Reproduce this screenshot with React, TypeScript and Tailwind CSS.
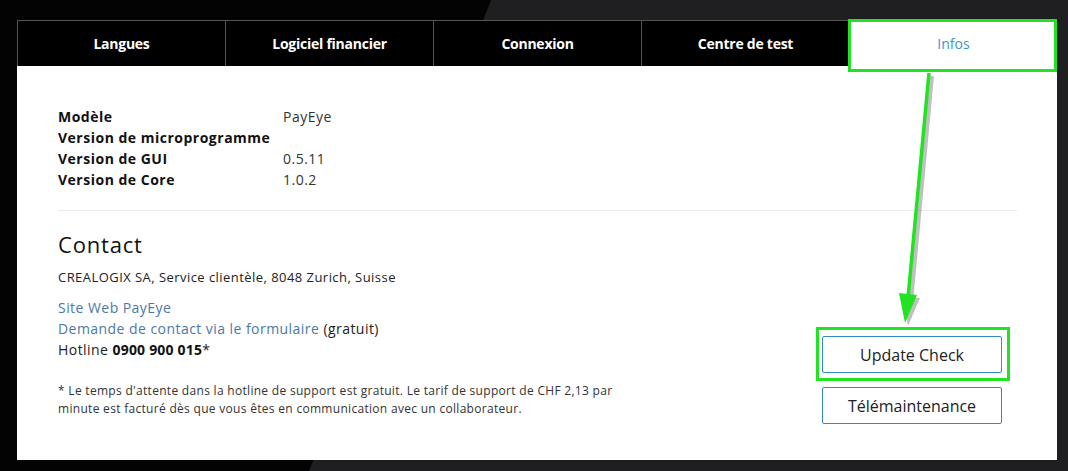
import React from "react";

const tabs = ["Langues", "Logiciel financier", "Connexion", "Centre de test", "Infos"];

export default function App() {
  return (
    <div
      className="relative h-[471px] w-full overflow-hidden bg-[#030303]"
      style={{ fontFamily: '"Open Sans", "Liberation Sans", sans-serif' }}
    >
      {/* background diagonal */}
      <svg className="absolute inset-0 h-[471px] w-[1068px]" viewBox="0 0 1068 471">
        <polygon points="491,0 1068,0 1068,471 309,471" fill="#1f1f21" />
      </svg>

      <div className="relative pl-[17px] pt-[20px]">
        <div className="w-[1040px]">
          {/* tabs */}
          <div className="flex h-[46px] border-l border-t border-[#555]">
            {tabs.map((t, i) => {
              const active = i === tabs.length - 1;
              return (
                <div
                  key={t}
                  className={
                    active
                      ? "flex flex-1 items-center justify-center bg-white text-[14px] text-[#3b95d3]"
                      : "flex flex-1 items-center justify-center border-r border-[#555] bg-black text-[14px] font-bold tracking-[-0.25px] text-white"
                  }
                >
                  {t}
                </div>
              );
            })}
          </div>

          {/* panel */}
          <div className="h-[394px] bg-white pl-[41px] pr-[40px] pt-[40px]">
            <div className="text-[14px] leading-[21px] tracking-[0.5px] text-[#222]">
              {[
                ["Modèle", "PayEye"],
                ["Version de microprogramme", ""],
                ["Version de GUI", "0.5.11"],
                ["Version de Core", "1.0.2"],
              ].map(([k, v]) => (
                <div key={k} className="flex">
                  <div className="w-[225px] font-bold text-[#111]">{k}</div>
                  <div className="text-[#333]">{v}</div>
                </div>
              ))}
            </div>

            <div className="mt-[20px] h-px bg-[#ebebeb]" />

            <div className="mt-[18px] flex justify-between">
              <div>
                <div className="text-[22px] leading-[30px] tracking-[0.8px] text-[#111]">Contact</div>
                <div className="mt-[8px] text-[13px] leading-[20px] tracking-[0.45px] text-[#222]">
                  CREALOGIX SA, Service clientèle, 8048 Zurich, Suisse
                </div>
                <div className="mt-[10px] text-[14px] leading-[21px] tracking-[0.45px] text-[#222]">
                  <div className="text-[#4a79a8]">Site Web PayEye</div>
                  <div>
                    <span className="text-[#4a79a8]">Demande de contact via le formulaire</span> (gratuit)
                  </div>
                  <div>
                    Hotline <span className="font-bold tracking-[0.2px] text-[#111]">0900 900 015</span>*
                  </div>
                </div>
                <div className="mt-[22px] text-[12px] leading-[18px] tracking-[0.3px] text-[#333]">
                  <div>
                    * Le temps d'attente dans la hotline de support est gratuit. Le tarif de support de CHF 2,13 par
                  </div>
                  <div>minute est facturé dès que vous êtes en communication avec un collaborateur.</div>
                </div>
              </div>

              <div className="mr-[15px] flex flex-col gap-[14px] pt-[107px]">
                <div className="relative">
                  <button className="flex h-[37px] w-[180px] items-center justify-center rounded-[2px] border border-[#2f8bc4] bg-white text-[16px] text-[#222]">
                    Update Check
                  </button>
                  <div className="pointer-events-none absolute -bottom-[8px] -left-[6px] -right-[8px] -top-[9px] border-[3px] border-[#22e322]" />
                </div>
                <button className="flex h-[37px] w-[180px] items-center justify-center rounded-[2px] border border-[#2f8bc4] bg-white text-[16px] text-[#222]">
                  Télémaintenance
                </button>
              </div>
            </div>
          </div>
        </div>
      </div>

      {/* annotation: box around Infos tab */}
      <div className="pointer-events-none absolute left-[848px] top-[19px] h-[53px] w-[209px] border-[3px] border-[#22e322]" />

      {/* annotation arrow */}
      <svg className="pointer-events-none absolute inset-0 h-[471px] w-[1068px]" viewBox="0 0 1068 471">
        <g opacity="0.3" transform="translate(3,2)">
          <line x1="929" y1="74" x2="908" y2="300" stroke="#333" strokeWidth="4" />
          <polygon points="899,294 917,296 905,324" fill="#333" />
        </g>
        <line x1="929" y1="73" x2="908" y2="298" stroke="#22e322" strokeWidth="3.5" />
        <polygon points="899,293 917,295 905,323" fill="#22e322" />
      </svg>
    </div>
  );
}
